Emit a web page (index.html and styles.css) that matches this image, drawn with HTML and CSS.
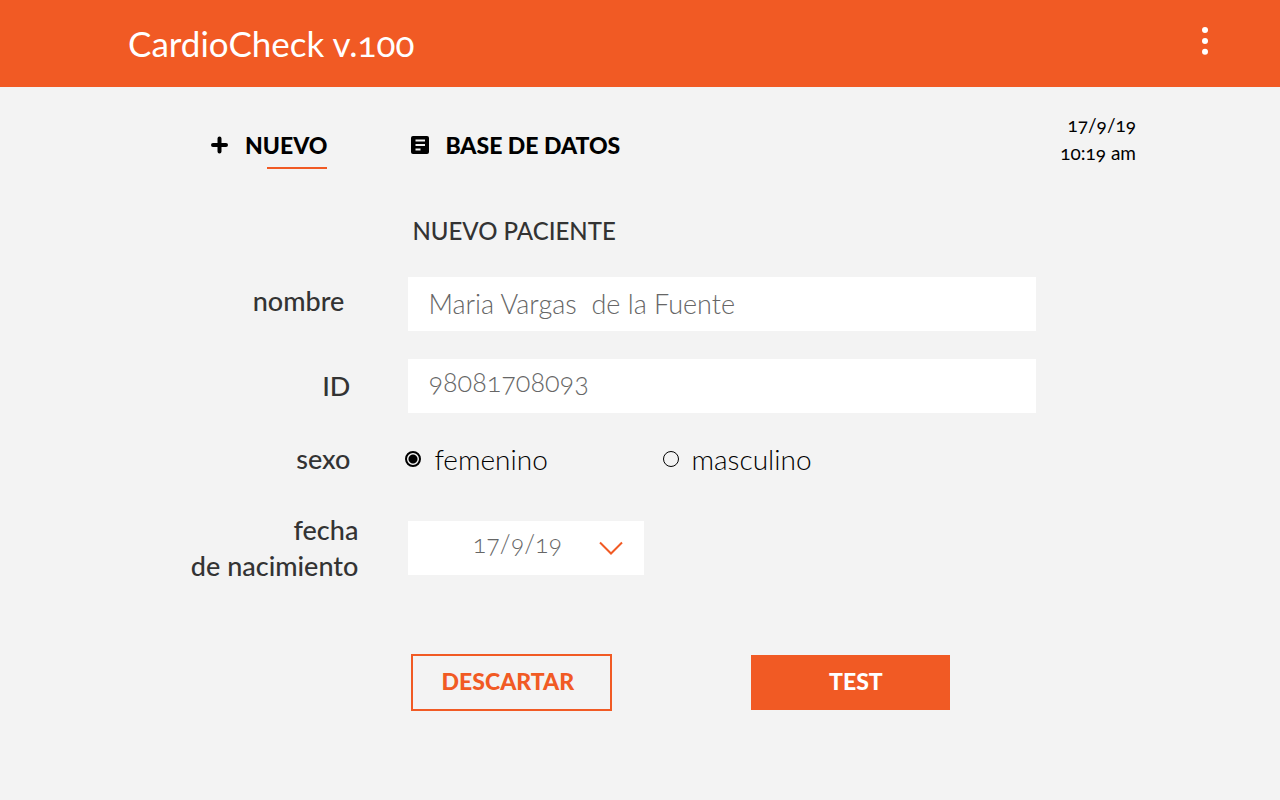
FILE: index.html
```html
<!DOCTYPE html>
<html lang="es">
<head>
<meta charset="utf-8">
<meta name="viewport" content="width=device-width, initial-scale=1">
<title>CardioCheck v.100</title>
<link rel="stylesheet" href="styles.css">
</head>
<body>
<header class="topbar">
  <h1 class="brand">CardioCheck v.100</h1>
  <button class="menu" type="button" aria-label="Menú">
    <svg width="8" height="28" viewBox="0 0 8 28" fill="#fff"><circle cx="4" cy="3" r="3"/><circle cx="4" cy="14" r="3"/><circle cx="4" cy="24.700" r="3"/></svg>
  </button>
</header>

<div class="subbar">
  <nav class="tabs">
    <a class="tab tab-new" href="#nuevo">
      <svg width="18" height="18" viewBox="0 0 18 18" fill="none" stroke="#000" stroke-width="4" stroke-linecap="round"><path d="M8.500 2.500v13M2 9h13"/></svg>
      <span>NUEVO</span>
    </a>
    <a class="tab" href="#datos">
      <svg width="18" height="18" viewBox="0 0 18 18"><rect width="18" height="18" rx="2" fill="#000"/><path d="M4.500 4.500h9.500M4.500 9h9.500M4.500 13.500h5" stroke="#f3f3f3" stroke-width="1.800" fill="none"/></svg>
      <span>BASE DE DATOS</span>
    </a>
  </nav>
  <p class="clock"><time>17/9/19</time><br><time>10:19 am</time></p>
</div>

<main>
  <form class="patient">
    <h2 class="heading">NUEVO PACIENTE</h2>

    <label class="label label-name" for="nombre">nombre</label>
    <input class="field" id="nombre" type="text" value="Maria Vargas  de la Fuente">

    <label class="label label-inset" for="id">ID</label>
    <input class="field field-number" id="id" type="text" value="98081708093">

    <span class="label label-inset" id="sexo">sexo</span>
    <div class="choices" role="radiogroup" aria-labelledby="sexo">
      <label class="choice"><input class="radio" type="radio" name="sexo" checked>femenino</label>
      <label class="choice"><input class="radio" type="radio" name="sexo">masculino</label>
    </div>

    <label class="label" for="fecha">fecha<br>de nacimiento</label>
    <div class="date">
      <select class="field date-select" id="fecha"><option>17/9/19</option></select>
      <svg class="chevron" width="24" height="14" viewBox="0 0 24 14" fill="none" stroke="#f15a24" stroke-width="2"><path d="M1 1.500l11 11l11-11"/></svg>
    </div>

    <div class="actions">
      <button class="btn btn-outline" type="reset">DESCARTAR</button>
      <button class="btn btn-solid" type="submit">TEST</button>
    </div>
  </form>
</main>
</body>
</html>
```
FILE: styles.css
```css
* { box-sizing: border-box; }

body {
  margin: 0;
  min-height: 100vh;
  background: #f3f3f3;
  color: #000;
  font-family: Lato, "Open Sans", sans-serif;
  font-variant-numeric: oldstyle-nums;
}

input, select, button { font: inherit; font-variant-numeric: inherit; border-radius: 0; }

.topbar {
  display: flex;
  align-items: center;
  justify-content: space-between;
  padding: 20px 71px 20px 10%;
  background: #f15a24;
  color: #fff;
}

.brand { margin: 0; font-size: 35px; line-height: 47px; font-weight: 400; }

.menu {
  display: flex;
  margin: 0 0 6px;
  padding: 0;
  border: 0;
  background: none;
  cursor: pointer;
}

.subbar {
  display: flex;
  justify-content: space-between;
  padding: 24px 144px 0 211px;
}

.tabs { display: flex; gap: 84px; padding-top: 18px; }

.tab {
  display: flex;
  align-items: center;
  gap: 16px;
  height: 40px;
  padding-bottom: 8px;
  color: #000;
  font-size: 23px;
  font-weight: 900;
  line-height: 28px;
  text-decoration: none;
  white-space: nowrap;
}

.tab-new {
  background: linear-gradient(#f15a24, #f15a24) right bottom / 60px 2px no-repeat;
}

.clock {
  margin: 0;
  font-size: 19px;
  font-weight: 400;
  line-height: 28px;
  text-align: right;
  white-space: nowrap;
}

.patient {
  display: grid;
  grid-template-columns: 28% 49%;
  column-gap: 50px;
  row-gap: 28px;
  align-items: center;
  padding-top: 44px;
}

.heading {
  grid-column: 2;
  margin: 0 0 0 4px;
  color: #333;
  font-size: 24px;
  font-weight: 500;
  line-height: 36px;
}

.label {
  color: #333;
  font-size: 27px;
  font-weight: 500;
  line-height: 36px;
  text-align: right;
}

.label-inset { padding-right: 8px; }
.label-name { padding: 0 14px 6px 0; }

.field {
  width: 100%;
  height: 54px;
  padding: 0 20px 2px;
  border: 0;
  background: #fff;
  color: #666;
  font-size: 27px;
  font-weight: 300;
}

.field-number { padding-bottom: 10px; }

.choices { display: grid; grid-template-columns: 41% 1fr; }

.choice {
  display: flex;
  align-items: center;
  gap: 13px;
  font-size: 28px;
  font-weight: 300;
  line-height: 36px;
}

.radio {
  appearance: none;
  width: 16px;
  height: 16px;
  margin: 0 0 0 -3px;
  border: 1px solid #000;
  border-radius: 50%;
}

.radio:checked {
  border-width: 2px;
  background: radial-gradient(circle, #000 4px, #f3f3f3 5px);
}

.date {
  position: relative;
  width: 236px;
  margin: 16px 0;
}

.date-select {
  appearance: none;
  display: block;
  padding: 0 38px 10px 20px;
  font-size: 25px;
  text-align-last: center;
}

.chevron {
  position: absolute;
  right: 21px;
  top: 20px;
  pointer-events: none;
}

.actions {
  grid-column: 2;
  display: flex;
  align-items: center;
  gap: 139px;
  padding: 35px 0 0 3px;
}

.btn {
  width: 201px;
  height: 57px;
  border: 2px solid #f15a24;
  font-size: 23px;
  font-weight: 900;
  cursor: pointer;
}

.btn-outline { padding: 0 8px 4px 0; background: transparent; color: #f15a24; }
.btn-solid { width: 199px; height: 55px; padding: 0 0 4px 10px; background: #f15a24; color: #fff; }
```
